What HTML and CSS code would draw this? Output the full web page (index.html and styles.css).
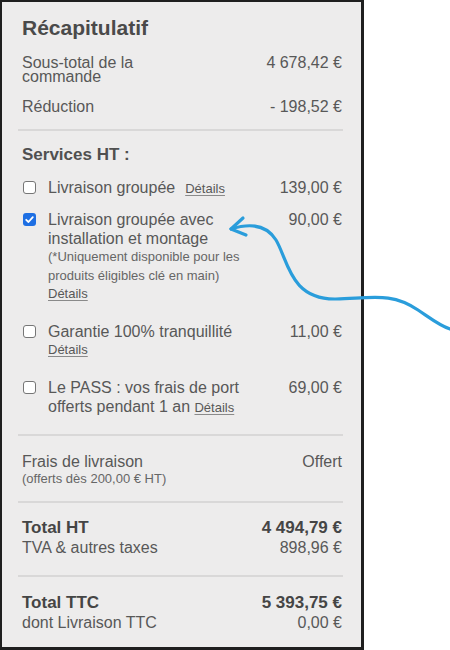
FILE: index.html
```html
<!DOCTYPE html>
<html lang="fr">
<head>
<meta charset="utf-8">
<title>Récapitulatif</title>
<link rel="stylesheet" href="styles.css">
</head>
<body>
<div class="page">
  <div class="panel">
    <h1 class="title">Récapitulatif</h1>

    <div class="sum-row first">
      <div class="sum-label tight">Sous-total de la<br>commande</div>
      <div class="sum-value tight">4 678,42 €</div>
    </div>
    <div class="sum-row reduc">
      <div class="sum-label">Réduction</div>
      <div class="sum-value">- 198,52 €</div>
    </div>

    <div class="divider d1"></div>

    <div class="services-title">Services HT :</div>

    <div class="svc r1">
      <span class="cb"></span>
      <div class="svc-label">Livraison groupée<a class="det gap">Détails</a></div>
      <div class="price">139,00 €</div>
    </div>

    <div class="svc r2">
      <span class="cb checked"><svg viewBox="0 0 13 13" width="13" height="13"><path d="M3.2 6.8 L5.5 9 L9.8 4.2" fill="none" stroke="#fff" stroke-width="1.8" stroke-linecap="round" stroke-linejoin="round"/></svg></span>
      <div class="svc-label">Livraison groupée avec installation et montage
        <div class="note">(*Uniquement disponible pour les produits éligibles clé en main)</div>
        <div class="note"><a class="det">Détails</a></div>
      </div>
      <div class="price">90,00 €</div>
    </div>

    <div class="svc r3">
      <span class="cb"></span>
      <div class="svc-label">Garantie 100% tranquillité
        <div class="note"><a class="det">Détails</a></div>
      </div>
      <div class="price">11,00 €</div>
    </div>

    <div class="svc r4">
      <span class="cb"></span>
      <div class="svc-label">Le PASS : vos frais de port offerts pendant 1 an <a class="det">Détails</a></div>
      <div class="price">69,00 €</div>
    </div>

    <div class="divider d2"></div>

    <div class="sum-row frais">
      <div class="sum-label">Frais de livraison
        <div class="small">(offerts dès 200,00 € HT)</div>
      </div>
      <div class="sum-value">Offert</div>
    </div>

    <div class="divider d3"></div>

    <div class="total-block tb1">
      <div class="total-row strong"><span>Total HT</span><span>4 494,79 €</span></div>
      <div class="total-row"><span>TVA &amp; autres taxes</span><span>898,96 €</span></div>
    </div>

    <div class="divider d4"></div>

    <div class="total-block tb2">
      <div class="total-row strong"><span>Total TTC</span><span>5 393,75 €</span></div>
      <div class="total-row sub"><span>dont Livraison TTC</span><span>0,00 €</span></div>
    </div>
  </div>

  <svg class="arrow" viewBox="0 0 450 650" width="450" height="650">
    <path d="M231 229 C 250 223 266 224 276 240 C 288 260 290 300 336 299 C 372 298 392 292 418 310 C 430 318 440 326 450 329" fill="none" stroke="#2a9ddb" stroke-width="3.2" stroke-linecap="round"/>
    <path d="M243 218 L 231 229 L 246 235" fill="none" stroke="#2a9ddb" stroke-width="3.2" stroke-linecap="round" stroke-linejoin="round"/>
  </svg>
</div>
</body>
</html>
```

FILE: styles.css
```css
* { box-sizing: border-box; }

html, body {
  margin: 0;
  padding: 0;
  background: #ffffff;
}

body {
  font-family: "Liberation Sans", Arial, Helvetica, sans-serif;
  color: #585858;
  font-size: 16px;
  line-height: 19px;
}

.page {
  position: relative;
  width: 450px;
  height: 650px;
}

.panel {
  width: 364px;
  height: 650px;
  background: #edecec;
  border-style: solid;
  border-color: #1f1f1f;
  border-width: 2px 3px 3px 2px;
  padding: 14px 19px 0 20px;
}

.title {
  margin: 0;
  font-size: 21px;
  line-height: 24px;
  font-weight: bold;
  color: #4a4a4a;
}

.sum-row {
  display: flex;
  justify-content: space-between;
  align-items: flex-start;
}

.sum-row.first { margin-top: 15.5px; }
.sum-row.reduc { margin-top: 12px; }
.sum-row.frais { margin-top: 16px; }

.sum-label.tight,
.sum-value.tight { line-height: 14.5px; }

.sum-value { white-space: nowrap; }

.divider {
  height: 2px;
  background: #d9d8d8;
  margin-left: -4px;
  margin-right: -1px;
}

.d1 { margin-top: 13.5px; }
.d2 { margin-top: 17px; }
.d3 { margin-top: 15px; }
.d4 { margin-top: 17px; }

.services-title {
  margin-top: 14px;
  font-size: 17px;
  font-weight: bold;
  color: #505050;
}

.svc {
  display: flex;
  align-items: flex-start;
}

.r1 { margin-top: 14px; }
.r2 { margin-top: 12px; }
.r3 { margin-top: 18.5px; }
.r4 { margin-top: 18px; }

.cb {
  flex: none;
  width: 13px;
  height: 13px;
  margin: 3px 0 0 1px;
  border: 1.5px solid #767676;
  border-radius: 3px;
  background: #ffffff;
  display: flex;
}

.cb.checked {
  border: none;
  background: #1e6fe3;
}

.svc-label {
  flex: 1;
  margin-left: 12px;
}

.price {
  margin-left: 16px;
  white-space: nowrap;
}

.note {
  font-size: 13px;
  line-height: 18.5px;
  color: #666666;
}

.det {
  font-size: 13px;
  color: #585858;
  text-decoration: underline;
  text-decoration-color: #8a8a8a;
  text-underline-offset: 2px;
}

.det.gap { margin-left: 10px; }

.small {
  font-size: 13px;
  line-height: 15px;
  color: #666666;
}

.tb1 { margin-top: 15px; }
.tb2 { margin-top: 16px; }

.total-row {
  display: flex;
  justify-content: space-between;
  line-height: 20px;
}

.total-row.strong {
  font-size: 17px;
  font-weight: bold;
  color: #454545;
}

.total-row.sub { line-height: 19px; }

.arrow {
  position: absolute;
  left: 0;
  top: 0;
  pointer-events: none;
}
```
